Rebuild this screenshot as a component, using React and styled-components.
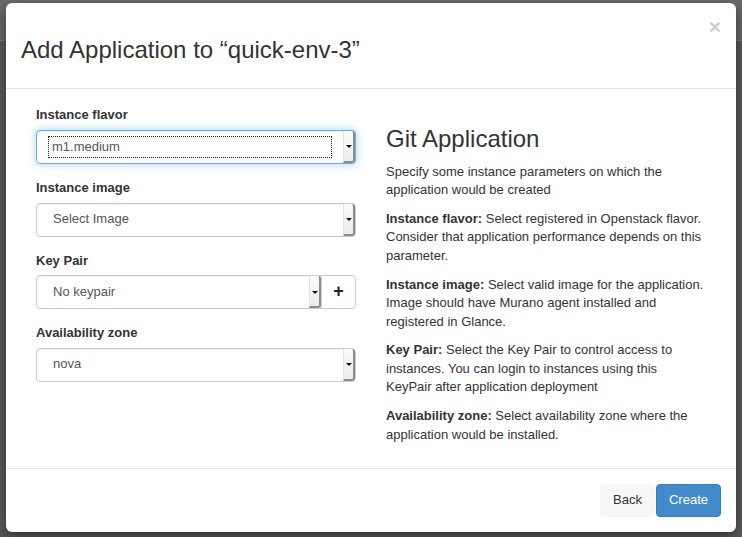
import React from 'react';
import styled, { createGlobalStyle, css } from 'styled-components';

const GlobalStyle = createGlobalStyle`
    html, body {
        margin: 0;
        padding: 0;
    }
    body {
        font-family: "Liberation Sans", Arial, sans-serif;
        font-size: 13px;
        line-height: 1.428571;
        color: #333;
    }
`;

const Backdrop = styled.div`
    width: 742px;
    height: 537px;
    box-sizing: border-box;
    padding: 3px 6px 0;
    overflow: hidden;
    background: linear-gradient(#6b6b6b 0 40px, #787878 40px 41px, #5c5c5c 41px);
`;

const Dialog = styled.div`
    width: 730px;
    box-sizing: border-box;
    background: #fff;
    border-radius: 6px;
    box-shadow: 0 5px 15px rgba(0, 0, 0, 0.5);
`;

const Header = styled.div`
    display: flex;
    align-items: flex-start;
    justify-content: space-between;
    padding: 15px;
    border-bottom: 1px solid #e5e5e5;
`;

const Title = styled.h3`
    margin: 19px 0 10px;
    font-size: 24px;
    font-weight: 500;
    line-height: 1.1;
    color: #333;
`;

const Close = styled.button`
    margin-top: -2px;
    padding: 0;
    border: 0;
    background: transparent;
    font-family: inherit;
    font-size: 21px;
    font-weight: bold;
    line-height: 1;
    color: #000;
    opacity: 0.2;
    cursor: pointer;
`;

const Body = styled.div`
    display: grid;
    grid-template-columns: 1fr 1fr;
    padding: 17px 0 14px;
`;

const Column = styled.div`
    padding: 0 15px 0 30px;
    & + & {
        padding: 0 30px 0 15px;
    }
`;

const FormGroup = styled.div`
    margin-bottom: 15px;
`;

const Label = styled.label`
    display: block;
    margin-bottom: 5px;
    font-weight: bold;
`;

const InputRow = styled.div`
    display: flex;
`;

const SelectBox = styled.div`
    flex: 1;
    display: flex;
    align-items: stretch;
    height: 34px;
    box-sizing: border-box;
    border: 1px solid #ccc;
    border-radius: ${p => (p.$joined ? '4px 0 0 4px' : '4px')};
    background: #fff;
    color: #555;
    box-shadow: inset 0 1px 1px rgba(0, 0, 0, 0.075);
    ${p => p.$focused && css`
        border-color: #66afe9;
        box-shadow: inset 0 1px 1px rgba(0, 0, 0, 0.075), 0 0 8px rgba(102, 175, 233, 0.6);
    `}
`;

const SelectValue = styled.span`
    flex: 1;
    display: flex;
    align-items: center;
    margin: 6px 12px;
    padding-left: 4px;
    ${p => p.$focused && css`
        outline: 1px dotted #222;
        padding-left: 3px;
    `}
`;

const SelectArrow = styled.span`
    width: 9px;
    display: flex;
    align-items: center;
    justify-content: center;
    background: linear-gradient(#fbfbfb, #ececec);
    border-left: 1px solid #e3e3e3;
    border-right: 2px solid #8c8c8c;
    border-bottom: 2px solid #8c8c8c;
    border-radius: 0 3px 3px 0;
    &::after {
        content: '';
        border-left: 3px solid transparent;
        border-right: 3px solid transparent;
        border-top: 3px solid #111;
        margin-top: 2px;
    }
`;

const AddonButton = styled.button`
    width: 35px;
    height: 34px;
    box-sizing: border-box;
    margin-left: -1px;
    border: 1px solid #ccc;
    border-radius: 0 4px 4px 0;
    background: #fff;
    color: #222;
    font-family: inherit;
    font-size: 18px;
    font-weight: bold;
    line-height: 1;
    padding: 0 0 2px;
`;

const InfoTitle = styled.h3`
    margin: 20px 0 10px;
    font-size: 24px;
    font-weight: 500;
    line-height: 1.1;
`;

const Para = styled.p`
    margin: 0 0 10px;
`;

const Footer = styled.div`
    display: flex;
    justify-content: flex-end;
    gap: 1px;
    padding: 15px;
    border-top: 1px solid #e5e5e5;
`;

const Button = styled.button`
    height: 33px;
    box-sizing: border-box;
    padding: 6px 12px;
    font-family: inherit;
    font-size: 13px;
    line-height: 1.428571;
    border-radius: 4px;
    border: 1px solid ${p => (p.$primary ? '#357ebd' : '#f7f7f7')};
    background: ${p => (p.$primary ? '#428bca' : '#f7f7f7')};
    color: ${p => (p.$primary ? '#fff' : '#333')};
    cursor: pointer;
`;

const fields = [
    { label: 'Instance flavor', value: 'm1.medium', focused: true },
    { label: 'Instance image', value: 'Select Image' },
    { label: 'Key Pair', value: 'No keypair', addon: true },
    { label: 'Availability zone', value: 'nova' },
];

const help = [
    { term: 'Instance flavor:', text: 'Select registered in Openstack flavor. Consider that application performance depends on this parameter.' },
    { term: 'Instance image:', text: 'Select valid image for the application. Image should have Murano agent installed and registered in Glance.' },
    { term: 'Key Pair:', text: 'Select the Key Pair to control access to instances. You can login to instances using this KeyPair after application deployment' },
    { term: 'Availability zone:', text: 'Select availability zone where the application would be installed.' },
];

export default function App() {
    return (
        <>
            <GlobalStyle />
            <Backdrop>
                <Dialog>
                    <Header>
                        <Title>Add Application to “quick-env-3”</Title>
                        <Close>×</Close>
                    </Header>
                    <Body>
                        <Column>
                            {fields.map(f => (
                                <FormGroup key={f.label}>
                                    <Label>{f.label}</Label>
                                    <InputRow>
                                        <SelectBox $focused={f.focused} $joined={f.addon}>
                                            <SelectValue $focused={f.focused}>{f.value}</SelectValue>
                                            <SelectArrow />
                                        </SelectBox>
                                        {f.addon && <AddonButton>+</AddonButton>}
                                    </InputRow>
                                </FormGroup>
                            ))}
                        </Column>
                        <Column>
                            <InfoTitle>Git Application</InfoTitle>
                            <Para>Specify some instance parameters on which the application would be created</Para>
                            {help.map(h => (
                                <Para key={h.term}>
                                    <strong>{h.term}</strong> {h.text}
                                </Para>
                            ))}
                        </Column>
                    </Body>
                    <Footer>
                        <Button>Back</Button>
                        <Button $primary>Create</Button>
                    </Footer>
                </Dialog>
            </Backdrop>
        </>
    );
}
